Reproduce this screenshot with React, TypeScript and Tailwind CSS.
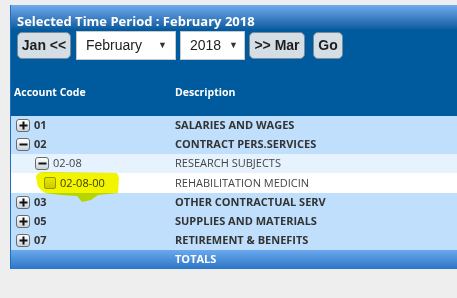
import React from "react";

type Row = {
  code: string;
  desc: string;
  level: 1 | 2 | 3;
  icon: "plus" | "minus" | "box";
};

const rows: Row[] = [
  { code: "01", desc: "SALARIES AND WAGES", level: 1, icon: "plus" },
  { code: "02", desc: "CONTRACT PERS.SERVICES", level: 1, icon: "minus" },
  { code: "02-08", desc: "RESEARCH SUBJECTS", level: 2, icon: "minus" },
  { code: "02-08-00", desc: "REHABILITATION MEDICIN", level: 3, icon: "box" },
  { code: "03", desc: "OTHER CONTRACTUAL SERV", level: 1, icon: "plus" },
  { code: "05", desc: "SUPPLIES AND MATERIALS", level: 1, icon: "plus" },
  { code: "07", desc: "RETIREMENT & BENEFITS", level: 1, icon: "plus" },
];

function TreeIcon({ kind }: { kind: Row["icon"] }) {
  if (kind === "box") {
    return (
      <span className="w-[12px] h-[12px] rounded-[2px] border border-[#a0a0a0] bg-gradient-to-b from-[#f4f4f4] to-[#d4d4d4]" />
    );
  }
  return (
    <span className="w-[14px] h-[13px] rounded-[3px] border border-[#6b6b6b] bg-gradient-to-b from-[#ffffff] to-[#c9d3dc] flex items-center justify-center">
      <svg width="9" height="9" viewBox="0 0 9 9">
        <rect x="0.5" y="3.5" width="8" height="2" fill="#111" />
        {kind === "plus" && <rect x="3.5" y="0.5" width="2" height="8" fill="#111" />}
      </svg>
    </span>
  );
}

export default function App() {
  return (
    <div
      className="w-[457px] h-[298px] bg-[#eeeeee] overflow-hidden pt-[5px] pl-[10px]"
      style={{ fontFamily: '"Open Sans", Arial, sans-serif' }}
    >
      <div className="w-[460px] bg-[#005a9e] border-l border-[#1f6fc0]">
        {/* title */}
        <div className="h-[25px] bg-gradient-to-b from-[#6fabee] to-[#005a9e] pl-[6px] pt-[3px]">
          <span className="text-white font-bold text-[13px] leading-[20px]">
            Selected Time Period : February 2018
          </span>
        </div>

        {/* period controls */}
        <div
          className="flex items-center h-[31px] pl-[6px]"
          style={{ fontFamily: '"Liberation Sans", Arial, sans-serif' }}
        >
          <button className="w-[54px] h-[27px] rounded-[5px] border border-[#7d8a96] bg-[#d5dde5] text-[#1e1e1e] text-[14px] font-bold">
            Jan &lt;&lt;
          </button>
          <div className="ml-[5px] w-[100px] h-[29px] bg-white border border-[#c8c8c8] flex items-center justify-between pl-[9px] pr-[8px] text-[14px] text-[#222]">
            <span>February</span>
            <span className="text-[9px] text-[#333]">▼</span>
          </div>
          <div className="ml-[4px] w-[65px] h-[29px] bg-white border border-[#c8c8c8] flex items-center justify-between pl-[9px] pr-[6px] text-[14px] text-[#222]">
            <span>2018</span>
            <span className="text-[9px] text-[#333]">▼</span>
          </div>
          <button className="ml-[4px] w-[56px] h-[27px] rounded-[5px] border border-[#7d8a96] bg-[#d5dde5] text-[#1e1e1e] text-[14px] font-bold">
            &gt;&gt; Mar
          </button>
          <button className="ml-[8px] w-[30px] h-[27px] rounded-[5px] border border-[#7d8a96] bg-[#d5dde5] text-[#1e1e1e] text-[14px] font-bold">
            Go
          </button>
        </div>

        {/* column headers */}
        <div className="h-[55px] flex items-center text-white font-bold text-[10.5px] pt-[8px]">
          <span className="w-[164px] pl-[3px]">Account Code</span>
          <span>Description</span>
        </div>

        {/* tree rows */}
        <div className="relative">
          {rows.map((r) => (
            <div
              key={r.code}
              className={`flex items-center text-[11px] ${
                r.level === 1
                  ? "h-[19px] bg-[#bfdffc] font-bold text-[#333333]"
                  : r.level === 2
                    ? "h-[19px] bg-[#e6f2fd] text-[#444444]"
                    : "h-[20px] bg-white text-[#444444]"
              }`}
            >
              <div
                className={`w-[164px] flex items-center gap-[4px] ${
                  r.level === 1 ? "pl-[5px]" : r.level === 2 ? "pl-[24px]" : "pl-[33px]"
                }`}
              >
                <TreeIcon kind={r.icon} />
                <span>{r.code}</span>
              </div>
              <span>{r.desc}</span>
            </div>
          ))}

          {/* marker highlight drawn over the tree */}
          <svg
            className="absolute left-0 top-0 pointer-events-none mix-blend-multiply"
            width="140"
            height="140"
            viewBox="0 0 140 140"
          >
            <path
              d="M25,61 Q26,56 33,56 L106,57 L108,62 L107,77 L87,79 L80,84 L71,86 L66,80 L50,79 L34,77 L27,71 Z"
              fill="#f2f400"
            />
          </svg>
        </div>

        {/* totals */}
        <div className="h-[19px] bg-gradient-to-b from-[#6aa8ec] to-[#2a76c6] flex items-center text-white font-bold text-[11px]">
          <span className="w-[164px]" />
          <span>TOTALS</span>
        </div>
      </div>
    </div>
  );
}
